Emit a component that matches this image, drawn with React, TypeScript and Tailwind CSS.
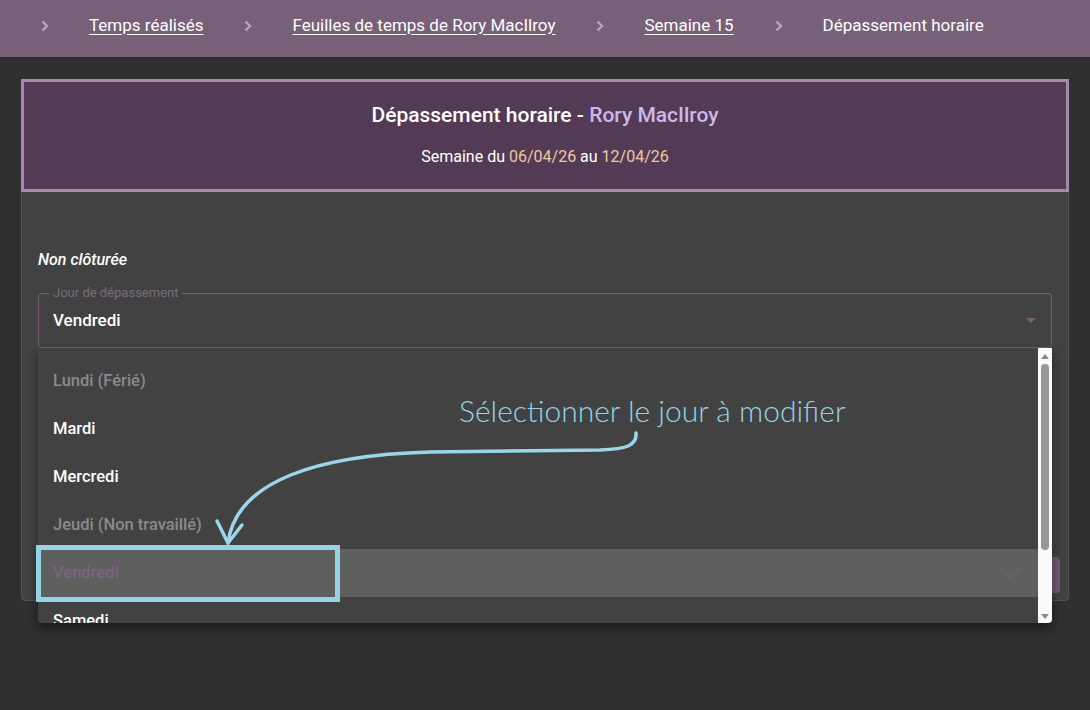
import React from "react";

const crumbs = [
  { label: "Temps réalisés", link: true },
  { label: "Feuilles de temps de Rory MacIlroy", link: true },
  { label: "Semaine 15", link: true },
  { label: "Dépassement horaire", link: false },
];

const Chevron = () => (
  <svg width="12" height="14" viewBox="0 0 12 14" className="shrink-0">
    <path d="M3.5 2.5 L8 7 L3.5 11.5" fill="none" stroke="#b9a9ba" strokeWidth="2.4" />
  </svg>
);

const days = [
  { label: "Lundi (Férié)", disabled: true },
  { label: "Mardi" },
  { label: "Mercredi" },
  { label: "Jeudi (Non travaillé)", disabled: true },
  { label: "Vendredi", selected: true },
  { label: "Samedi" },
];

export default function App() {
  return (
    <div
      className="relative w-full h-[710px] overflow-hidden bg-[#303030] text-white"
      style={{ fontFamily: "Roboto, 'Noto Sans', sans-serif" }}
    >
      {/* breadcrumb */}
      <nav className="h-[58px] bg-[#786078] border-b border-[#2b2b2b] flex items-center pl-[39px] pb-[6px] text-[17px]">
        {crumbs.map((c, i) => (
          <div key={i} className="flex items-center">
            <Chevron />
            <span
              className={
                "ml-[38px] mr-[39px] " + (c.link ? "underline underline-offset-[3px]" : "")
              }
            >
              {c.label}
            </span>
          </div>
        ))}
      </nav>

      <main className="px-[21px] pt-[21px]">
        <div className="w-[1048px] h-[522px] bg-[#424242] border border-[#555555] rounded-b-[4px] flex flex-col">
          <div className="h-[113px] -mx-px -mt-px pb-[3px] border-[3px] border-[#a68aad] bg-[#543b55] flex flex-col items-center justify-center">
            <div className="text-[21px] font-medium leading-7">
              Dépassement horaire - <span className="text-[#cbb8ec]">Rory MacIlroy</span>
            </div>
            <div className="text-[16px] mt-[18px] leading-5">
              Semaine du <span className="text-[#f0c9a2]">06/04/26</span> au{" "}
              <span className="text-[#f0c9a2]">12/04/26</span>
            </div>
          </div>

          <div className="px-4 pt-[58px] flex-1 flex flex-col">
            <div className="italic font-medium text-[16px] leading-5">Non clôturée</div>

            <div className="relative mt-[23px] h-[55px] rounded-[4px] border-[1.5px] border-[#7a5e7c]">
              <span className="absolute -top-[9px] left-[10px] px-[4px] bg-[#424242] text-[13px] leading-4 text-[#7a6a7c]">
                Jour de dépassement
              </span>
              <div className="h-full flex items-center pl-[14px] pr-[14px]">
                <span className="text-[17px] font-medium">Vendredi</span>
                <svg className="ml-auto" width="12" height="8" viewBox="0 0 12 8">
                  <path d="M1 1 L11 1 L6 6 Z" fill="#7a5e7c" />
                </svg>
              </div>
            </div>

            <div className="flex-1" />
            <div className="flex justify-end -mr-[8px] mb-[7px]">
              <div className="w-[100px] h-[36px] rounded-[4px] bg-[#735a73]" />
            </div>
          </div>
        </div>
      </main>

      {/* dropdown menu */}
      <div className="absolute left-[38px] top-[348px] w-[1014px] h-[275px] bg-[#424242] rounded-b-[4px] shadow-[0_6px_12px_rgba(0,0,0,0.45)] flex overflow-hidden">
        <div className="flex-1 pt-[9px]">
          {days.map((d, i) => (
            <div
              key={i}
              className={
                "h-[48px] flex items-center pl-[15px] pr-[16px] text-[16.5px] font-medium " +
                (d.selected ? "bg-[#5f5f5f] text-[#7a6480]" : d.disabled ? "text-[#8b8b8b]" : "text-white")
              }
            >
              {d.label}
              {d.selected && (
                <svg className="ml-auto" width="18" height="14" viewBox="0 0 18 14">
                  <path d="M1 7 L6 12 L17 1.5" fill="none" stroke="#735a78" strokeWidth="2" />
                </svg>
              )}
            </div>
          ))}
        </div>
        <div className="w-[14px] bg-[#fafafa] flex flex-col items-center">
          <svg className="mt-[5px]" width="10" height="7" viewBox="0 0 10 7">
            <path d="M1 6 L5 1 L9 6 Z" fill="#8a8a8a" />
          </svg>
          <div className="mt-[4px] w-[8px] h-[186px] rounded-full bg-[#979797]" />
          <div className="flex-1" />
          <svg className="mb-[3px]" width="10" height="7" viewBox="0 0 10 7">
            <path d="M1 1 L9 1 L5 6 Z" fill="#8a8a8a" />
          </svg>
        </div>
      </div>

      {/* annotation */}
      <div
        className="absolute left-[459px] top-[391px] text-[30px] leading-[38px] text-[#92d4e6] whitespace-nowrap"
        style={{ fontFamily: "Lato, sans-serif", fontWeight: 300 }}
      >
        Sélectionner le jour à modifier
      </div>
      <svg className="absolute left-0 top-0 pointer-events-none" width="1090" height="710">
        <path
          d="M636 433 C637 446 626 449 600 450 L430 452 C320 455 236 480 228 543"
          fill="none"
          stroke="#98d8ea"
          strokeWidth="3.5"
          strokeLinecap="round"
        />
        <path
          d="M217 521 L228 543 L242 525"
          fill="none"
          stroke="#98d8ea"
          strokeWidth="3.5"
          strokeLinecap="round"
          strokeLinejoin="round"
        />
        <rect x="38.5" y="547.5" width="299" height="52" fill="none" stroke="#94d4e6" strokeWidth="5" />
      </svg>
    </div>
  );
}
